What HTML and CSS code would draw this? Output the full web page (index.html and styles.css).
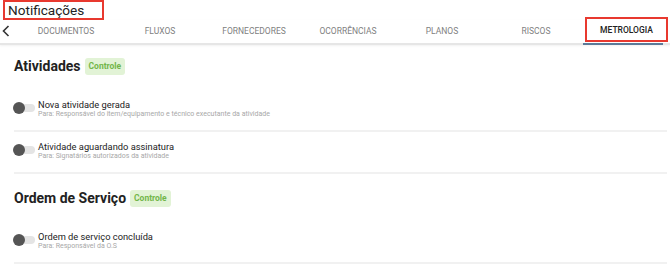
FILE: index.html
```html
<!DOCTYPE html>
<html lang="pt">
<head>
  <meta charset="UTF-8">
  <title>Notificações</title>
  <link rel="stylesheet" href="styles.css">
</head>
<body>

  <div class="page-title">Notificações</div>

  <div class="tab-bar">
    <span class="tab-back">
      <svg width="8" height="12" viewBox="0 0 8 12"><path d="M6.5 1 L1.5 6 L6.5 11" fill="none" stroke="#333" stroke-width="1.6"/></svg>
    </span>
    <div class="tabs">
      <a class="tab">DOCUMENTOS</a>
      <a class="tab">FLUXOS</a>
      <a class="tab">FORNECEDORES</a>
      <a class="tab">OCORRÊNCIAS</a>
      <a class="tab">PLANOS</a>
      <a class="tab">RISCOS</a>
      <a class="tab active"><span>METROLOGIA</span></a>
    </div>
  </div>

  <div class="content">
    <div class="section">
      <h2 class="section-title">Atividades <span class="badge">Controle</span></h2>

      <div class="notif-item">
        <span class="toggle"><span class="knob"></span></span>
        <div class="notif-text">
          <div class="notif-title">Nova atividade gerada</div>
          <div class="notif-sub">Para: Responsável do item/equipamento e técnico executante da atividade</div>
        </div>
      </div>

      <div class="notif-item">
        <span class="toggle"><span class="knob"></span></span>
        <div class="notif-text">
          <div class="notif-title">Atividade aguardando assinatura</div>
          <div class="notif-sub">Para: Signatários autorizados da atividade</div>
        </div>
      </div>
    </div>

    <div class="section">
      <h2 class="section-title">Ordem de Serviço <span class="badge">Controle</span></h2>

      <div class="notif-item">
        <span class="toggle"><span class="knob"></span></span>
        <div class="notif-text">
          <div class="notif-title">Ordem de serviço concluída</div>
          <div class="notif-sub">Para: Responsável da O.S</div>
        </div>
      </div>
    </div>
  </div>

</body>
</html>
```

FILE: styles.css
```css
body {
  font-family: Roboto, "Liberation Sans", sans-serif;
  background-color: white;
  color: #222;
  margin: 0;
  padding: 0;
  width: 670px;
  overflow: hidden;
}

.page-title {
  width: 101px;
  height: 20px;
  margin-left: 3px;
  padding-left: 3px;
  box-sizing: border-box;
  line-height: 17px;
  font-size: 13.6px;
  border: 2px solid #e8392f;
  color: #222;
}

/* barra de abas */
.tab-bar {
  display: flex;
  align-items: stretch;
  height: 23px;
  border-bottom: 2px solid #e6e6e6;
  box-shadow: 0 1px 2px rgba(0, 0, 0, 0.06);
}

.tab-back {
  width: 19px;
  display: flex;
  align-items: center;
  padding-left: 2px;
  padding-bottom: 2px;
  box-sizing: border-box;
}

.tabs {
  display: flex;
  flex: 1;
}

.tab {
  width: 94px;
  flex-shrink: 0;
  display: flex;
  align-items: center;
  justify-content: center;
  padding-bottom: 2px;
  font-size: 8.5px;
  font-weight: 400;
  color: #808080;
  text-decoration: none;
  box-sizing: border-box;
}

.tab.active {
  position: relative;
  color: #222;
  font-weight: 500;
  border-bottom: 2px solid #5b7a98;
  margin-bottom: -2px;
  width: 80px;
}

.tab.active span {
  position: absolute;
  left: 2px;
  top: -3px;
  width: 83px;
  height: 25px;
  border: 2px solid #e8392f;
  box-sizing: border-box;
  display: flex;
  align-items: center;
  justify-content: center;
}

/* conteúdo */
.content {
  padding: 0 3px 0 14px;
}

.section-title {
  display: flex;
  align-items: center;
  gap: 4px;
  margin: 12px 0 24px;
  height: 18px;
  font-size: 14px;
  font-weight: bold;
  color: #222;
}

.section + .section .section-title {
  margin-top: 15px;
}

.badge {
  display: inline-block;
  background-color: #e2f3d6;
  color: #72b64a;
  font-size: 8.5px;
  font-weight: bold;
  padding: 3px 4px 4px;
  border-radius: 3px;
}

.notif-item {
  display: flex;
  align-items: flex-start;
  gap: 3px;
  padding: 9px 0 11px;
  border-bottom: 2px solid #f1f1f1;
}

.section-title + .notif-item {
  padding-top: 0;
}

.toggle {
  position: relative;
  width: 21px;
  height: 8px;
  margin-top: 5px;
  background-color: #e4e4e4;
  border-radius: 4px;
  flex-shrink: 0;
}

.toggle .knob {
  position: absolute;
  left: -1px;
  top: -2px;
  width: 12px;
  height: 12px;
  border-radius: 50%;
  background-color: #555;
}

.notif-title {
  font-size: 9.3px;
  line-height: 11px;
  color: #222;
}

.notif-sub {
  font-size: 7px;
  line-height: 9px;
  color: #a8a8a8;
}
```
